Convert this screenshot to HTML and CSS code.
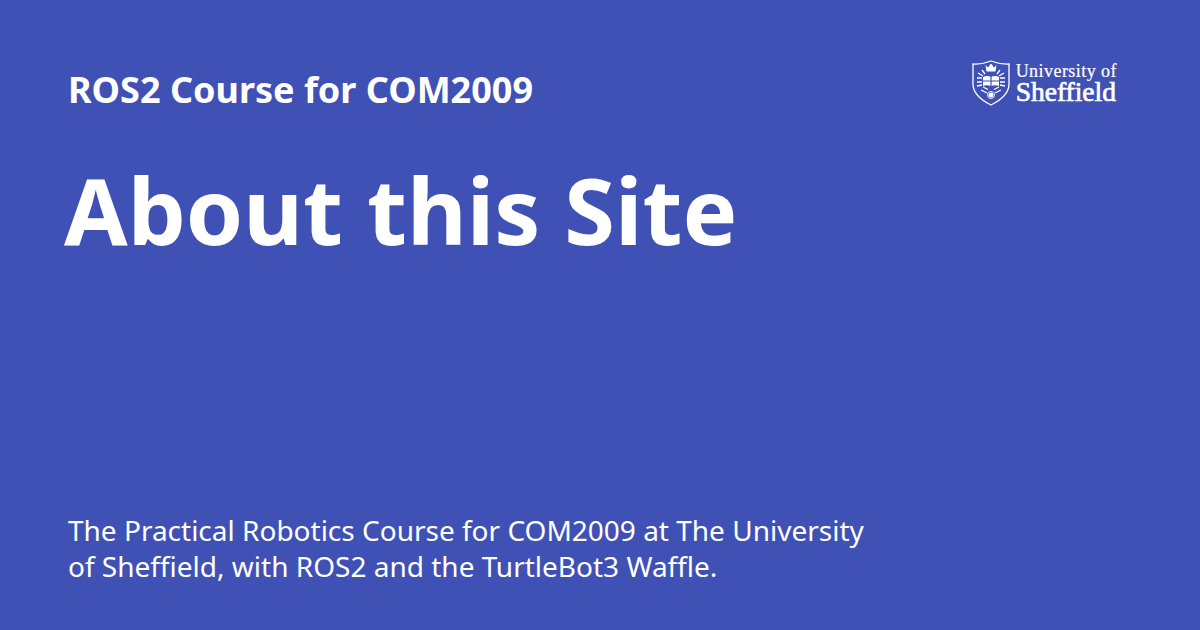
FILE: index.html
```html
<!DOCTYPE html>
<html lang="en">
<head>
<meta charset="utf-8">
<title>About this Site</title>
<link rel="stylesheet" href="styles.css">
</head>
<body>
<main class="card">
  <header class="top">
    <div class="site">ROS2 Course for COM2009</div>
    <div class="logo">
      <svg class="crest" viewBox="0 0 38 46" width="38" height="46" fill="none" stroke="#fff">
        <path d="M1 4 Q10 4.500 19 1 Q28 4.500 37 4 V24 Q37 36 19 45 Q1 36 1 24 Z" stroke-width="1.300"/>
        <path d="M13.500 5 L16 7.500 L18.500 4 H19.500 L22 7.500 L24.500 5 L23.500 11.500 H14.500 Z" fill="#fff" stroke="none"/>
        <path d="M11 17 Q15 15 19 17 Q23 15 27 17 V26 Q23 24.500 19 26 Q15 24.500 11 26 Z" fill="#fff" stroke="none"/>
        <path d="M19 16.500 V26 M11 21 H27" stroke="#3f51b5" stroke-width="1.200"/>
        <path d="M10 10 L13 14 M28 10 L25 14 M6 13 L11 16 M32 13 L27 16 M5 18 H10 M33 18 H28 M5 22 H10 M33 22 H28 M5 26 L10 25 M33 26 L28 25" stroke-width="1.300"/>
        <path d="M9 30 L15 33 M29 30 L23 33 M11 27 L16 29.500 M27 27 L22 29.500" stroke-width="1.300"/>
        <circle cx="19" cy="35" r="2.500" fill="#fff" stroke="none"/>
        <circle cx="19" cy="35" r="3.600" stroke-width="0.800"/>
      </svg>
      <div class="wordmark"><span class="w1">University of</span><span class="w2">Sheffield</span></div>
    </div>
  </header>
  <h1 class="title">About this Site</h1>
  <p class="desc">The Practical Robotics Course for COM2009 at The University of Sheffield, with ROS2 and the TurtleBot3 Waffle.</p>
</main>
</body>
</html>
```
FILE: styles.css
```css
html, body { margin: 0; padding: 0; }
body { width: 1200px; height: 630px; overflow: hidden; background: #3f51b5; color: #fff; font-family: "Noto Sans", sans-serif; }
.card { box-sizing: border-box; width: 1200px; height: 630px; padding: 60px 83px 46px 68px; display: flex; flex-direction: column; }
.top { display: flex; justify-content: space-between; align-items: flex-start; }
.site { font-size: 36px; font-weight: 700; line-height: 60px; }
.logo { display: flex; align-items: center; gap: 6px; }
.crest { display: block; }
.wordmark { display: flex; flex-direction: column; padding-bottom: 3px; font-family: "Liberation Serif", serif; line-height: 20px; }
.w1 { font-size: 18px; letter-spacing: 0.45px; -webkit-text-stroke: 0.2px #fff; }
.w2 { font-size: 27.500px; line-height: 21px; -webkit-text-stroke: 0.7px #fff; }
.title { margin: 30px 0 0 -4px; font-size: 92px; font-weight: 700; line-height: 120px; }
.desc { margin: auto 0 0; width: 810px; font-size: 28px; line-height: 36px; }
```
